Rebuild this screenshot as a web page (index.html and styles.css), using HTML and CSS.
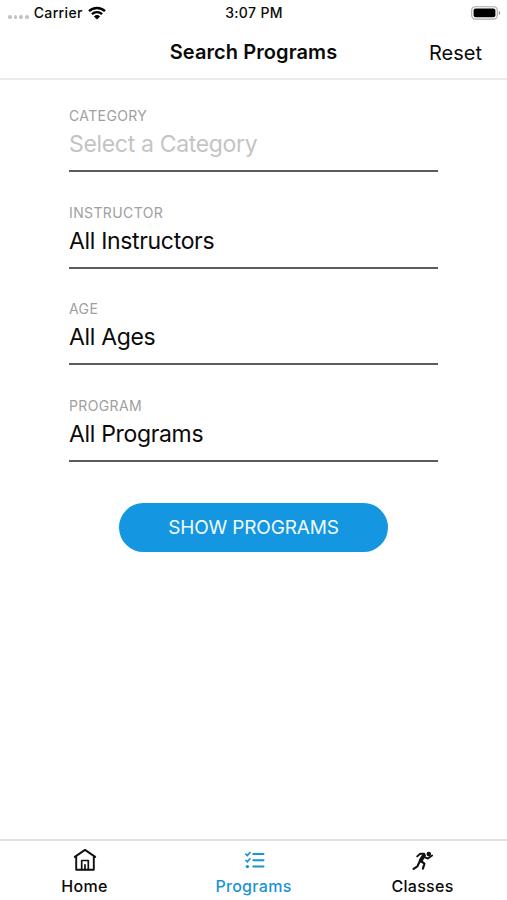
FILE: index.html
```html
<!DOCTYPE html>
<html lang="en">
<head>
  <meta charset="UTF-8" />
  <meta name="viewport" content="width=device-width, initial-scale=1.0" />
  <title>Search Programs</title>
  <link rel="stylesheet" href="styles.css">
</head>
<body>
  <div class="status-bar">
    <div class="carrier">
      <span class="signal"><i></i><i></i><i></i><i></i></span>
      <span class="carrier-name">Carrier</span>
      <svg class="wifi" width="18" height="14" viewBox="0 0 18 14">
        <path d="M1 5.2a11.5 11.5 0 0 1 16 0M3.9 8.2a7.4 7.4 0 0 1 10.2 0" fill="none" stroke="#000" stroke-width="2.4" />
        <path d="M9 13.6 5.9 10.5a4.5 4.5 0 0 1 6.2 0z" />
      </svg>
    </div>
    <div class="time">3:07 PM</div>
    <svg class="battery" width="30" height="14" viewBox="0 0 30 14">
      <rect x="0.7" y="0.7" width="25.6" height="12.4" rx="3.6" fill="#fff" stroke="#a9a9a9" stroke-width="1.1" />
      <rect x="2.6" y="2.6" width="21.8" height="8.6" rx="2" />
      <path d="M27.8 5v4q1.5-.6 1.5-2t-1.5-2z" fill="#999" />
    </svg>
  </div>

  <header class="nav-bar">
    <h1 class="title">Search Programs</h1>
    <button class="reset">Reset</button>
  </header>

  <main class="form">
    <div class="field">
      <div class="label">CATEGORY</div>
      <div class="value placeholder">Select a Category</div>
    </div>
    <div class="field">
      <div class="label">INSTRUCTOR</div>
      <div class="value">All Instructors</div>
    </div>
    <div class="field">
      <div class="label">AGE</div>
      <div class="value">All Ages</div>
    </div>
    <div class="field">
      <div class="label">PROGRAM</div>
      <div class="value">All Programs</div>
    </div>
    <button class="show-btn">SHOW PROGRAMS</button>
  </main>

  <nav class="tab-bar">
    <a class="tab">
      <svg width="24" height="24" viewBox="0 0 24 24" fill="none" stroke="#111" stroke-width="1.9" stroke-linejoin="round" stroke-linecap="round">
        <path d="M1.8 8.9 12 1.9l10.2 7M3.2 8.2v13.6h17.6V8.2" />
        <path d="M8.7 21.6v-9.1h6.6v9.1M12 16.8v4.8" stroke-width="1.7" />
      </svg>
      <span>Home</span>
    </a>
    <a class="tab active">
      <svg width="24" height="24" viewBox="0 0 24 24" fill="none" stroke="currentColor" stroke-width="2" stroke-linecap="round">
        <path d="M11.3 6h10.2M11.3 12.3h10.2M11.3 18.6h10.2" />
        <path d="M3.8 6.2l1.5 1.4L8 4.5M3.8 12.5l1.5 1.4L8 10.8" stroke-width="1.7" />
        <circle cx="5.4" cy="18.6" r="1.7" fill="currentColor" stroke="none" />
      </svg>
      <span>Programs</span>
    </a>
    <a class="tab">
      <svg width="24" height="24" viewBox="0 0 24 24" fill="none" stroke="#111" stroke-linejoin="round" stroke-linecap="round">
        <circle cx="17.8" cy="6.1" r="2.3" fill="#111" stroke="none" />
        <path d="M13 7.4 9.6 12.6" stroke-width="3.8" />
        <path d="M13.1 5.8 9.2 5.7 6.2 8.4M13.9 9.3l3 1.2 4.2-3" stroke-width="1.9" />
        <path d="M9.9 13l3.5 2.6-1.5 5M8.5 13.9l-2.1 4.4-3.8 2.5" stroke-width="2.2" />
      </svg>
      <span>Classes</span>
    </a>
  </nav>
</body>
</html>
```
FILE: styles.css
```css
* {
  margin: 0;
  padding: 0;
  box-sizing: border-box;
}

body {
  font-family: Inter, "Liberation Sans", sans-serif;
  width: 507px;
  height: 900px;
  overflow: hidden;
  display: flex;
  flex-direction: column;
  background: #fff;
  color: #0a0a0a;
}

button {
  font-family: inherit;
  border: none;
  background: none;
  color: inherit;
  cursor: pointer;
}

/* Status Bar */
.status-bar {
  height: 26px;
  padding: 0 6px 0 8px;
  display: grid;
  grid-template-columns: 1fr auto 1fr;
  align-items: center;
  font-size: 14px;
  font-weight: 500;
  letter-spacing: 0.35px;
}

.carrier {
  display: flex;
  align-items: center;
}

.carrier-name,
.time {
  padding-bottom: 2px;
}

.signal {
  display: flex;
  gap: 2px;
  padding-top: 8px;
  margin-right: 5px;
}

.signal i {
  width: 3.7px;
  height: 3.7px;
  border-radius: 50%;
  background: #c4c4c4;
}

.wifi {
  margin-left: 5px;
}

.time {
  margin-left: -1px;
}

.battery {
  justify-self: end;
}

/* Navigation Bar */
.nav-bar {
  height: 54px;
  padding: 0 25px;
  display: grid;
  grid-template-columns: 1fr auto 1fr;
  align-items: center;
  border-bottom: 2px solid #ebebeb;
}

.title {
  grid-column: 2;
  font-size: 20px;
  font-weight: 600;
  letter-spacing: 0.08px;
}

.reset {
  justify-self: end;
  padding-top: 1px;
  font-size: 20px;
}

/* Form */
.form {
  flex: 1;
  padding: 27px 69px 0;
  display: flex;
  flex-direction: column;
}

.field {
  height: 65px;
  margin-bottom: 31.5px;
  border-bottom: 2px solid #5c5c5c;
}

.label {
  font-size: 14px;
  line-height: 18px;
  letter-spacing: 0.38px;
  color: #a0a0a0;
}

.value {
  margin-top: 4px;
  font-size: 23px;
  line-height: 30px;
  letter-spacing: -0.33px;
}

.placeholder {
  color: #c4c4c4;
}

.show-btn {
  align-self: center;
  width: 269px;
  height: 49px;
  margin-top: 10px;
  border-radius: 25px;
  background: #1496e1;
  color: #f0faff;
  font-size: 19px;
  letter-spacing: -0.15px;
}

/* Tab Bar */
.tab-bar {
  height: 61px;
  padding-top: 7px;
  display: flex;
  border-top: 2px solid #e2e2e2;
}

.tab {
  flex: 1;
  display: flex;
  flex-direction: column;
  align-items: center;
  font-size: 16px;
  font-weight: 500;
  line-height: 20px;
  letter-spacing: 0.3px;
}

.tab span {
  margin-top: 4px;
}

.active {
  color: #1b92d6;
}
```
